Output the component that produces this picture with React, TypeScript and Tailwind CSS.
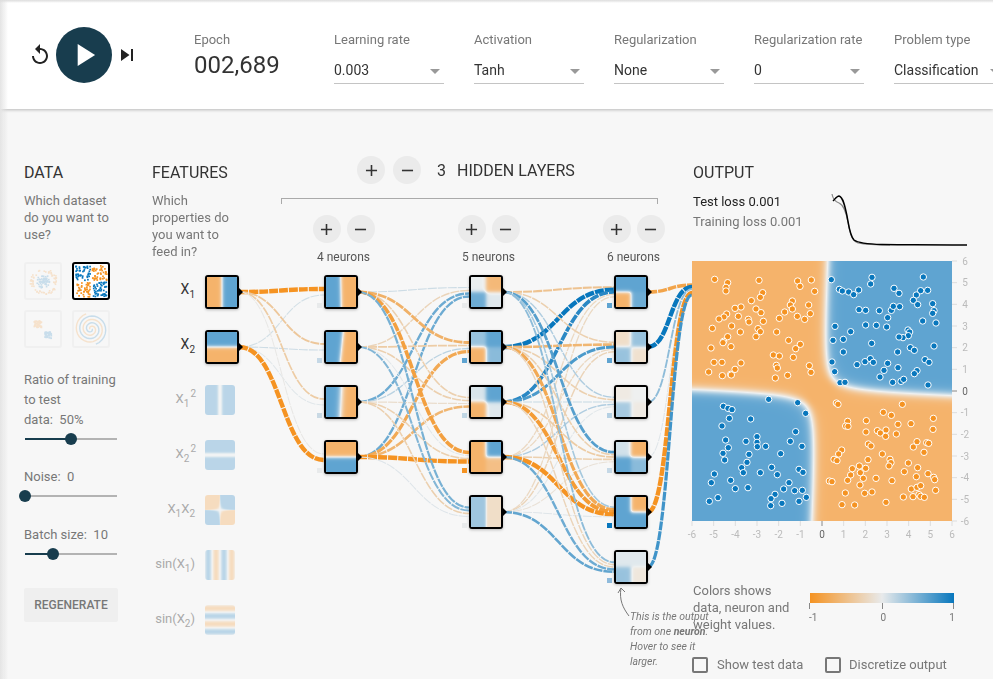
import { useEffect, useRef } from "react";

type Field = (x: number, y: number) => number;

const ORANGE = [245, 179, 107];
const MID = [238, 240, 240];
const BLUE = [95, 164, 209];

function heatColor(v: number) {
  const t = Math.min(1, Math.abs(v));
  const end = v < 0 ? ORANGE : BLUE;
  return MID.map((m, i) => Math.round(m + (end[i] - m) * t));
}

function linkColor(w: number) {
  const t = Math.min(1, Math.abs(w));
  const end = w < 0 ? [245, 147, 34] : [8, 119, 189];
  const mid = [232, 234, 235];
  const c = mid.map((m, i) => Math.round(m + (end[i] - m) * t));
  return `rgb(${c[0]},${c[1]},${c[2]})`;
}

function quad(tl: number, tr: number, bl: number, br: number, tilt = 0, s = 1.2, cx = 0, cy = 0): Field {
  return (x, y) => {
    const a = (1 + Math.tanh(s * (x + tilt * y - cx))) / 2;
    const b = (1 + Math.tanh(s * (y - cy))) / 2;
    return (bl * (1 - a) + br * a) * (1 - b) + (tl * (1 - a) + tr * a) * b;
  };
}

const outputField: Field = (x, y) => {
  const X = x + 0.1 - 0.05 * y;
  const Y = y + 0.07 + 0.035 * x;
  return Math.tanh((4 * (X * Y - 0.4)) / Math.sqrt(X * X + Y * Y + 0.01));
};

function HeatMap({ f, size }: { f: Field; size: number }) {
  const ref = useRef<HTMLCanvasElement>(null);
  useEffect(() => {
    const ctx = ref.current?.getContext("2d");
    if (!ctx) return;
    const img = ctx.createImageData(size, size);
    for (let r = 0; r < size; r++) {
      for (let c = 0; c < size; c++) {
        const x = ((c + 0.5) / size) * 12 - 6;
        const y = 6 - ((r + 0.5) / size) * 12;
        const col = heatColor(f(x, y));
        const k = (r * size + c) * 4;
        img.data[k] = col[0];
        img.data[k + 1] = col[1];
        img.data[k + 2] = col[2];
        img.data[k + 3] = 255;
      }
    }
    ctx.putImageData(img, 0, 0);
  }, [f, size]);
  return <canvas ref={ref} width={size} height={size} className="block w-full h-full" />;
}

// diagram geometry, in page pixels
const TOP = 109;
const STEP = 55;
const NODE = 34;

const inputNodes = [quad(-1, 1, -1, 1), quad(1, 1, -1, -1)];

const features: { label: React.ReactNode; f: Field }[] = [
  { label: <>X<Sub>1</Sub><Sup>2</Sup></>, f: (x) => Math.tanh(x * x * 0.8) },
  { label: <>X<Sub>2</Sub><Sup>2</Sup></>, f: (_x, y) => Math.tanh(y * y * 0.8) },
  { label: <>X<Sub>1</Sub>X<Sub>2</Sub></>, f: (x, y) => Math.tanh(x * y * 1.2) },
  { label: <>sin(X<Sub>1</Sub>)</>, f: (x) => Math.sin(x) },
  { label: <>sin(X<Sub>2</Sub>)</>, f: (_x, y) => Math.sin(y) },
];

const layers: { x: number; nodes: Field[]; bias: string[]; inputs: number[][] }[] = [
  {
    x: 324,
    nodes: [quad(1, -1, 1, -1, 0.02), quad(1, -1, 1, -1, -0.1, 1.1, 0.3), quad(1, -1, 1, -1, -0.05, 0.7), quad(-1, -1, 1, 1)],
    bias: ["#e8eaeb", "#c5d8e6", "#c9d9e4", "#e8eaeb"],
    inputs: [
      [-1, 0.1],
      [-0.4, 0.12],
      [-0.35, 0.03],
      [-0.03, -1],
    ],
  },
  {
    x: 469,
    nodes: [
      quad(0.03, -0.9, 0.9, 0.1),
      quad(0.6, 1, -1, 0.7),
      quad(0.15, 1, -1, 0.1),
      quad(-1, 1, -1, -0.8),
      quad(0.55, -0.3, 0.55, -0.3, 0, 2),
    ],
    bias: ["#e8eaeb", "#5fa4d1", "#c0d6e4", "#f59322", "#e8eaeb"],
    inputs: [
      [0.12, -0.25, 0.55, 0.55],
      [-0.65, -0.35, 0.2, -0.75],
      [-0.3, -0.3, -0.15, -0.6],
      [-0.85, 0.03, -0.3, -1],
      [0.5, 0.45, -0.3, 0.05],
    ],
  },
  {
    x: 614,
    nodes: [
      quad(1, 1, -1, 0.9),
      quad(-0.3, 0.6, 0.6, -0.25),
      quad(-0.1, 0, 0.5, -0.1),
      quad(0.2, -1, 1, 0.7),
      quad(1, -1, 1, 1),
      quad(0.1, 0.1, 0.6, -0.15),
    ],
    bias: ["#5fa4d1", "#5fa4d1", "#b5d0e3", "#c5d8e6", "#0877bd", "#8fbbdc"],
    inputs: [
      [-0.45, 1, 0.85, -0.2, -0.2],
      [-0.3, -0.6, 0.7, -0.2, -0.25],
      [0.25, -0.3, 0.15, 0.25, 0.03],
      [0.65, -0.3, -0.35, -0.3, -0.1],
      [0.3, -0.75, -0.9, -1, 0.04],
      [0.4, -0.25, -0.25, 0.55, 0.6],
    ],
  },
];

const outputInputs = [-0.8, 1, 0.4, 0.04, -1, 0.75];

function makeLink(x1: number, y1: number, x2: number, y2: number, w: number, key: string) {
  const mx = (x1 + x2) / 2;
  return (
    <path
      key={key}
      d={`M${x1} ${y1}C${mx} ${y1} ${mx} ${y2} ${x2} ${y2}`}
      fill="none"
      stroke={linkColor(w)}
      strokeWidth={1 + Math.pow(Math.abs(w), 1.5) * 3.4}
      strokeDasharray="9 1"
    />
  );
}

function centerY(i: number) {
  return 275 + i * STEP + NODE / 2;
}

function Links() {
  const out: React.ReactNode[] = [];
  let prevX = 205;
  layers.forEach((layer, l) => {
    layer.inputs.forEach((row, t) => {
      row.forEach((w, s) => {
        const off = ((s - (row.length - 1) / 2) / row.length) * 12;
        out.push(makeLink(prevX + NODE, centerY(s), layer.x, centerY(t) + off, w, `${l}-${t}-${s}`));
      });
    });
    prevX = layer.x;
  });
  outputInputs.forEach((w, s) => {
    const off = ((s - 2.5) / 6) * 12;
    out.push(makeLink(prevX + NODE, centerY(s), 692, 290 + off, w, `o-${s}`));
  });
  return <>{out}</>;
}

function Notch({ x, i }: { x: number; i: number }) {
  const y = centerY(i);
  return <polygon points={`${x + NODE - 1},${y - 5} ${x + NODE + 4},${y} ${x + NODE - 1},${y + 5}`} fill="#000" />;
}

function NetNode({ x, i, f }: { x: number; i: number; f: Field }) {
  return (
    <div
      className="absolute w-[34px] h-[34px] border-2 border-black rounded-[3px] overflow-hidden bg-white shadow-[0_1px_3px_rgba(0,0,0,0.25)]"
      style={{ left: x, top: 275 + i * STEP - TOP }}
    >
      <HeatMap f={f} size={30} />
    </div>
  );
}

function Sub({ children }: { children: React.ReactNode }) {
  return <span className="text-[10px] relative top-[4px]">{children}</span>;
}

function Sup({ children }: { children: React.ReactNode }) {
  return <span className="text-[10px] relative top-[-6px] left-[1px]">{children}</span>;
}

function Slider({ pct, label }: { pct: number; label: string }) {
  return (
    <div>
      <div className="text-[13px] leading-5 whitespace-pre">{label}</div>
      <div className="relative mt-[3px] ml-[1px] w-[92px] h-3 flex items-center">
        <div className="w-full h-[2px] bg-[#b3b3b3]" />
        <div className="absolute left-0 h-[2px] bg-[#183d4e]" style={{ width: `${pct}%` }} />
        <div
          className="absolute w-3 h-3 rounded-full bg-[#183d4e] -translate-x-1/2"
          style={{ left: `${pct}%` }}
        />
      </div>
    </div>
  );
}

function HeaderSelect({ label, value }: { label: string; value: string }) {
  return (
    <div className="w-[110px] shrink-0 mr-[30px]">
      <div className="text-[13px] leading-4 text-[#777]">{label}</div>
      <div className="mt-[5px] h-[31px] pt-[4px] flex items-center justify-between border-b border-[#c4c4c4] pr-[3px] text-[14px] text-[#333]">
        <span>{value}</span>
        <span className="w-0 h-0 border-x-[5px] border-x-transparent border-t-[5px] border-t-[#999] mr-[1px] mt-[2px]" />
      </div>
    </div>
  );
}

function RoundButton({ kind }: { kind: "+" | "-" }) {
  return (
    <button className="w-7 h-7 rounded-full bg-[#ebebeb] flex items-center justify-center">
      <svg viewBox="0 0 24 24" className="w-[19px] h-[19px]" fill="#333">
        {kind === "+" ? <path d="M19 13h-6v6h-2v-6H5v-2h6V5h2v6h6v2z" /> : <path d="M19 13H5v-2h14v2z" />}
      </svg>
    </button>
  );
}

function rng(seed: number) {
  let s = seed;
  return () => {
    s = (s * 16807) % 2147483647;
    return s / 2147483647;
  };
}

function DatasetCircle() {
  const r = rng(11);
  const dots: React.ReactNode[] = [];
  for (let i = 0; i < 130; i++) {
    const inner = i % 2 === 0;
    const a = r() * Math.PI * 2;
    const d = inner ? r() * 7 : 10 + r() * 3.5;
    dots.push(
      <rect key={i} x={17 + Math.cos(a) * d} y={17 + Math.sin(a) * d} width="1.6" height="1.6" fill={inner ? "#5fa4d1" : "#f5b36b"} />
    );
  }
  return <svg viewBox="0 0 34 34" className="w-full h-full">{dots}</svg>;
}

function DatasetXor() {
  const r = rng(23);
  const dots: React.ReactNode[] = [];
  for (let i = 0; i < 210; i++) {
    const x = r() * 31 + 1;
    const y = r() * 31 + 1;
    if (Math.abs(x - 16.5) < 1 || Math.abs(y - 16.5) < 1) continue;
    dots.push(
      <rect key={i} x={x} y={y} width="1.7" height="1.7" fill={(x - 16.5) * (y - 16.5) > 0 ? "#0877bd" : "#f59322"} />
    );
  }
  return <svg viewBox="0 0 34 34" className="w-full h-full">{dots}</svg>;
}

function DatasetGauss() {
  const r = rng(37);
  const dots: React.ReactNode[] = [];
  for (let i = 0; i < 70; i++) {
    const first = i % 2 === 0;
    const cx = first ? 11 : 21;
    const cy = first ? 11 : 22;
    dots.push(
      <rect key={i} x={cx + (r() - 0.5) * 7} y={cy + (r() - 0.5) * 7} width="1.8" height="1.8" fill={first ? "#f5b36b" : "#5fa4d1"} />
    );
  }
  return <svg viewBox="0 0 34 34" className="w-full h-full">{dots}</svg>;
}

function spiralPath(rot: number) {
  let d = "";
  for (let i = 0; i <= 60; i++) {
    const t = (i / 60) * 4.4 * Math.PI;
    const rad = 1 + (i / 60) * 15;
    d += `${i === 0 ? "M" : "L"}${(17 + Math.cos(t + rot) * rad).toFixed(1)} ${(17 + Math.sin(t + rot) * rad).toFixed(1)}`;
  }
  return d;
}

function DatasetSpiral() {
  return (
    <svg viewBox="0 0 34 34" className="w-full h-full" fill="none" strokeWidth="1.4">
      <path d={spiralPath(0)} stroke="#5fa4d1" />
      <path d={spiralPath(Math.PI)} stroke="#f5b36b" />
    </svg>
  );
}

function DatasetThumb({ active, children }: { active?: boolean; children: React.ReactNode }) {
  return active ? (
    <div className="w-[38px] h-[38px] border-2 border-black rounded-[3px] bg-white overflow-hidden">{children}</div>
  ) : (
    <div className="w-[38px] h-[38px] border-2 border-[#f0f0f0] rounded-[3px] overflow-hidden">
      <div className="w-full h-full opacity-30">{children}</div>
    </div>
  );
}

const topOrange = [[104,358],[143,368],[138,382],[138,393],[237,361],[353,363],[360,379],[394,360],[404,394],[248,398],[241,412],[214,422],[337,423],[331,435],[337,447],[386,435],[391,461],[374,478],[352,469],[314,456],[298,475],[183,441],[165,445],[228,447],[243,458],[140,462],[132,471],[117,477],[175,469],[205,478],[207,486],[250,484],[155,498],[97,505],[234,506],[241,515],[181,516],[290,516],[228,530],[143,530],[131,544],[129,548],[153,560],[93,564],[326,541],[361,553],[347,566],[280,585],[298,588],[340,592],[102,607],[126,607],[183,609],[165,628],[152,643],[154,645],[127,647],[86,636],[289,616],[292,624],[388,617],[393,637],[286,654],[323,646]];
const topBlue = [[454,359],[576,352],[572,372],[730,351],[478,388],[487,393],[506,396],[521,404],[536,390],[642,385],[657,400],[722,392],[743,391],[709,405],[700,421],[713,434],[758,431],[762,452],[758,460],[768,489],[728,483],[537,449],[557,451],[598,452],[634,451],[640,439],[659,440],[623,473],[465,499],[557,495],[589,496],[620,501],[512,515],[684,510],[689,516],[685,527],[669,533],[657,531],[459,541],[490,538],[575,550],[691,563],[703,571],[762,558],[653,576],[490,576],[456,606],[555,605],[571,596],[580,607],[531,614],[623,610],[735,599],[747,607],[654,623],[612,631],[711,632],[703,641],[600,651],[464,635],[480,668],[495,667],[638,667],[663,664],[671,658],[744,675]];
const botBlue = [[266,58],[353,68],[377,100],[130,79],[144,85],[156,89],[148,115],[212,117],[126,138],[347,155],[231,170],[137,180],[198,184],[231,187],[331,184],[232,200],[257,199],[145,203],[366,199],[129,220],[207,223],[302,221],[134,240],[201,247],[185,263],[190,278],[241,278],[275,262],[292,284],[357,268],[369,277],[103,282],[94,308],[152,301],[166,326],[204,323],[327,308],[311,327],[344,332],[367,331],[285,343],[379,352],[273,356],[357,364],[306,370],[272,377],[114,353],[88,364]];
const botOrange = [[469,69],[474,73],[667,73],[610,97],[634,106],[760,115],[503,124],[559,122],[654,133],[693,131],[497,138],[504,139],[592,152],[618,150],[558,156],[759,148],[601,159],[649,162],[617,169],[711,185],[740,188],[746,190],[565,192],[573,198],[700,201],[485,210],[732,217],[607,222],[476,222],[630,238],[633,248],[462,238],[471,242],[564,239],[685,249],[627,258],[713,263],[538,258],[517,266],[557,265],[541,278],[673,275],[512,285],[744,281],[761,292],[764,299],[709,290],[588,295],[550,295],[503,301],[448,303],[456,305],[636,302],[540,315],[694,327],[711,322],[722,317],[767,331],[496,339],[554,340],[576,336],[670,351],[699,350],[717,344],[722,349],[733,352],[618,367],[486,374],[524,375]];

function Dots({ pts, dy, fill }: { pts: number[][]; dy: number; fill: string }) {
  return (
    <>
      {pts.map((p, i) => (
        <circle key={i} cx={p[0] / 3 - 12} cy={p[1] / 3 + dy} r="3.2" fill={fill} stroke="#fff" strokeWidth="1" />
      ))}
    </>
  );
}

const TICKS = [-6, -5, -4, -3, -2, -1, 0, 1, 2, 3, 4, 5, 6];

function PlotOverlay() {
  return (
    <svg viewBox="0 0 260 260" className="absolute inset-0 w-[260px] h-[260px] overflow-visible">
      <Dots pts={topOrange} dy={-101} fill="#f59322" />
      <Dots pts={topBlue} dy={-101} fill="#0877bd" />
      <Dots pts={botBlue} dy={119} fill="#0877bd" />
      <Dots pts={botOrange} dy={119} fill="#f59322" />
      {TICKS.map((t) => {
        const p = ((t + 6) / 12) * 260;
        const zero = t === 0;
        const col = zero ? "#666" : "#bbb";
        return (
          <g key={t} fontSize="10" fontFamily="Roboto, sans-serif" fill={col}>
            <line x1={p} x2={p} y1="260" y2="265" stroke={zero ? "#888" : "#ddd"} />
            <text x={p} y="277" textAnchor="middle">{t}</text>
            <line y1={260 - p} y2={260 - p} x1="260" x2="265" stroke={zero ? "#888" : "#ddd"} />
            <text x="273" y={260 - p + 3.5} textAnchor="middle">{t}</text>
          </g>
        );
      })}
    </svg>
  );
}

function LossChart() {
  return (
    <svg viewBox="0 0 135 55" className="mt-[10px] w-[135px] h-[55px] overflow-visible" fill="none">
      <path d="M0 0C1 6 4 8 7 9C12 11 14 18 16 28C18 40 20 47 26 49C36 51 50 51 58 51" stroke="#888" strokeWidth="1.2" />
      <path d="M1 7C3 5 5 2 7 2C11 3 13 12 15 22C17 33 18 42 22 46C26 49 34 50 50 50.5C80 51 110 51 135 51" stroke="#000" strokeWidth="1.5" />
    </svg>
  );
}

export default function App() {
  return (
    <div className="relative w-[993px] h-[679px] overflow-hidden bg-[#f7f7f7] font-[Roboto,sans-serif] text-[#777]">
      {/* header */}
      <header className="relative z-10 h-[109px] bg-white shadow-[0_1px_3px_rgba(0,0,0,0.25)] flex items-start overflow-hidden">
        <div className="flex items-center pt-[27px] pl-[28px] w-[194px] shrink-0">
          <svg viewBox="0 0 24 24" className="w-6 h-6" fill="#222">
            <path d="M12 5V1L7 6l5 5V7c3.31 0 6 2.69 6 6s-2.69 6-6 6-6-2.69-6-6H4c0 4.42 3.58 8 8 8s8-3.58 8-8-3.58-8-8-8z" />
          </svg>
          <div className="ml-[4px] w-14 h-14 rounded-full bg-[#183d4e] flex items-center justify-center">
            <svg viewBox="0 0 24 24" className="w-[38px] h-[38px]" fill="#fff">
              <path d="M8 5v14l11-7z" />
            </svg>
          </div>
          <svg viewBox="0 0 24 24" className="ml-[3px] w-6 h-6" fill="#222">
            <path d="M6 18l8.5-6L6 6v12zM16 6v12h2V6h-2z" />
          </svg>
        </div>
        <div className="pt-[32px] w-[140px] shrink-0">
          <div className="text-[13px] leading-4 text-[#777]">Epoch</div>
          <div className="mt-[3px] text-[24px] leading-7 text-[#333]">002,689</div>
        </div>
        <div className="pt-[32px] flex">
          <HeaderSelect label="Learning rate" value="0.003" />
          <HeaderSelect label="Activation" value="Tanh" />
          <HeaderSelect label="Regularization" value="None" />
          <HeaderSelect label="Regularization rate" value="0" />
          <HeaderSelect label="Problem type" value="Classification" />
        </div>
      </header>

      {/* main */}
      <main className="relative h-[570px] flex">
        <svg viewBox={`0 ${TOP} 993 570`} className="absolute left-0 top-0 w-[993px] h-[570px]">
          <Links />
          {inputNodes.map((_, i) => <Notch key={i} x={205} i={i} />)}
          {layers.map((l) => l.nodes.map((_, i) => <Notch key={`${l.x}-${i}`} x={l.x} i={i} />))}
          <path d="M629 616C623 608 619 600 621 588M621 588L618 593M621 588L625 592" fill="none" stroke="#777" strokeWidth="1" />
        </svg>

        {inputNodes.map((f, i) => <NetNode key={i} x={205} i={i} f={f} />)}
        {layers.map((l) =>
          l.nodes.map((f, i) => (
            <div key={`${l.x}-${i}`}>
              <NetNode x={l.x} i={i} f={f} />
              <div
                className="absolute w-[5px] h-[5px]"
                style={{ left: l.x - 7, top: 275 + i * STEP - TOP + 28, backgroundColor: l.bias[i] }}
              />
            </div>
          ))
        )}
        {features.map((ft, i) => (
          <div
            key={i}
            className="absolute w-[30px] h-[30px] rounded-[3px] overflow-hidden opacity-40"
            style={{ left: 205, top: 385 + i * STEP - TOP }}
          >
            <HeatMap f={ft.f} size={30} />
          </div>
        ))}

        {/* input labels */}
        <div className="absolute right-[798px] top-[170px] text-right text-[14px] leading-5 text-[#333]">
          X<Sub>1</Sub>
        </div>
        <div className="absolute right-[798px] top-[225px] text-right text-[14px] leading-5 text-[#333]">
          X<Sub>2</Sub>
        </div>
        {features.map((ft, i) => (
          <div
            key={i}
            className="absolute right-[798px] text-right text-[13px] leading-5 text-[#aaa] whitespace-nowrap"
            style={{ top: 280 + i * STEP }}
          >
            {ft.label}
          </div>
        ))}

        {/* data column */}
        <section className="relative w-[152px] shrink-0 pl-6 pt-[54px]">
          <h4 className="text-[16px] leading-5 text-[#333]">DATA</h4>
          <p className="mt-[9px] w-[90px] text-[13px] leading-[17px]">Which dataset do you want to use?</p>
          <div className="mt-[19px] grid grid-cols-[38px_38px] gap-[10px]">
            <DatasetThumb><DatasetCircle /></DatasetThumb>
            <DatasetThumb active><DatasetXor /></DatasetThumb>
            <DatasetThumb><DatasetGauss /></DatasetThumb>
            <DatasetThumb><DatasetSpiral /></DatasetThumb>
          </div>
          <div className="mt-[22px] w-[94px] text-[13px] leading-5">
            Ratio of training
            <br />
            to test
          </div>
          <Slider pct={50} label="data:  50%" />
          <div className="mt-[22px]">
            <Slider pct={0} label="Noise:  0" />
          </div>
          <div className="mt-[23px]">
            <Slider pct={30} label="Batch size:  10" />
          </div>
          <button className="mt-[28px] w-[94px] h-[34px] bg-[#efefef] rounded-[2px] text-[12px] font-medium text-[#777]">
            REGENERATE
          </button>
        </section>

        {/* features column */}
        <section className="relative w-[129px] shrink-0 pt-[54px]">
          <h4 className="text-[16px] leading-5 text-[#333]">FEATURES</h4>
          <p className="mt-[9px] w-[90px] text-[13px] leading-[17px]">Which properties do you want to feed in?</p>
        </section>

        {/* hidden layers */}
        <section className="relative w-[411px] shrink-0 pt-[47px]">
          <div className="flex items-center pl-[76px] h-7">
            <RoundButton kind="+" />
            <div className="w-2" />
            <RoundButton kind="-" />
            <span className="ml-[16px] text-[16px] text-[#333] relative top-px">3</span>
            <span className="ml-[11px] text-[16px] text-[#333] relative top-px">HIDDEN LAYERS</span>
          </div>
          <div className="mt-[14px] w-[377px] h-[6px] border-t border-x border-[#aaa]" />
          <div className="mt-[11px] -ml-[10px] flex">
            {["4 neurons", "5 neurons", "6 neurons"].map((t) => (
              <div key={t} className="w-[145px] shrink-0 flex flex-col items-center">
                <div className="flex gap-[6px]">
                  <RoundButton kind="+" />
                  <RoundButton kind="-" />
                </div>
                <div className="mt-[6px] text-[12px] leading-4 text-[#555]">{t}</div>
              </div>
            ))}
          </div>
        </section>

        {/* output */}
        <section className="relative flex-1 pt-[54px]">
          <h4 className="ml-[1px] text-[16px] leading-5 text-[#333]">OUTPUT</h4>
          <div className="flex ml-[1px] h-[57px] mt-[1px]">
            <div className="w-[139px] pt-[8px] text-[13px] leading-5">
              <div className="text-[#222]">Test loss 0.001</div>
              <div>Training loss 0.001</div>
            </div>
            <LossChart />
          </div>
          <div className="relative mt-[20px] w-[260px] h-[260px]">
            <HeatMap f={outputField} size={260} />
            <PlotOverlay />
          </div>
          <div className="mt-[61px] ml-[1px] flex">
            <p className="w-[117px] pr-[17px] text-[13px] leading-[17px]">Colors shows data, neuron and weight values.</p>
            <div className="ml-[-1px] mt-[11px] w-[146px]">
              <div className="h-[10px] w-[144px] ml-[1px] bg-[linear-gradient(to_right,#f59322,#e8eaeb,#0877bd)]" />
              <div className="relative h-[6px] w-[145px] border-x border-[#888]">
                <div className="absolute left-1/2 top-0 h-[6px] w-px bg-[#888]" />
              </div>
              <div className="mt-[3px] flex justify-between text-[10px] leading-3 text-[#777]">
                <span>-1</span>
                <span>0</span>
                <span>1</span>
              </div>
            </div>
          </div>
        </section>

        {/* callout */}
        <p className="absolute left-[630px] top-[500px] w-[90px] text-[10.5px] leading-[15px] italic text-[#777]">
          This is the output from one <b className="font-bold">neuron</b>. Hover to see it larger.
        </p>

        {/* checkboxes */}
        <div className="absolute left-[692px] top-[546px] flex items-center">
          <span className="w-4 h-4 border-2 border-[#777] rounded-[2px]" />
          <span className="ml-[9px] w-[108px] text-[13px]">Show test data</span>
          <span className="w-4 h-4 border-2 border-[#777] rounded-[2px]" />
          <span className="ml-2 text-[13px]">Discretize output</span>
        </div>
      </main>

      {/* soft page edge */}
      <div className="absolute left-0 top-0 z-20 h-full w-2 bg-gradient-to-r from-[#e4e4e4] to-transparent" />
      <div className="absolute left-0 top-0 z-20 h-[3px] w-full bg-gradient-to-b from-[#dcdcdc] to-transparent" />
    </div>
  );
}
